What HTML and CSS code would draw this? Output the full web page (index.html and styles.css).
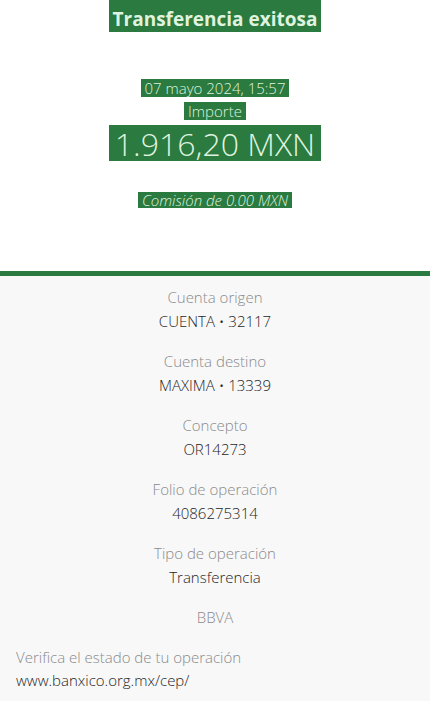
FILE: index.html
```html
<!DOCTYPE html>
<html lang="es">
<head>
<meta charset="utf-8">
<link rel="stylesheet" href="styles.css">
</head>
<body>
<section class="hero">
  <h1 class="title"><span class="hl">Transferencia exitosa</span></h1>
  <p class="date"><span class="hl">07 mayo 2024, 15:57</span></p>
  <p class="label-top"><span class="hl">Importe</span></p>
  <p class="amount"><span class="hl">1.916,20 MXN</span></p>
  <p class="fee"><span class="hl">Comisión de 0.00 MXN</span></p>
</section>
<div class="divider"></div>
<section class="details">
  <div class="row"><div class="lbl">Cuenta origen</div><div class="val">CUENTA • 32117</div></div>
  <div class="row"><div class="lbl">Cuenta destino</div><div class="val">MAXIMA • 13339</div></div>
  <div class="row"><div class="lbl">Concepto</div><div class="val">OR14273</div></div>
  <div class="row"><div class="lbl">Folio de operación</div><div class="val">4086275314</div></div>
  <div class="row"><div class="lbl">Tipo de operación</div><div class="val">Transferencia</div></div>
  <div class="bank">BBVA</div>
  <div class="verify">
    <div class="vlbl">Verifica el estado de tu operación</div>
    <div class="vlink">www.banxico.org.mx/cep/</div>
  </div>
</section>
</body>
</html>
```
FILE: styles.css
```css
* { box-sizing: border-box; }
html, body { margin: 0; padding: 0; }
body {
  width: 430px;
  height: 701px;
  overflow: hidden;
  background: #f8f8f9;
  font-family: "Open Sans", Roboto, sans-serif;
}
.hero {
  background: #ffffff;
  height: 271px;
}
.hero > * {
  margin: 0;
  display: flex;
  justify-content: center;
}
.hl {
  display: block;
  background: #2b7a3f;
  color: #dff3df;
  white-space: nowrap;
}
.hero .title { font-size: 19px; font-weight: 700; }
.title .hl { padding: 7px 4px 0; line-height: 25px; height: 32px; }
.hero .date { margin-top: 47px; font-size: 15px; font-weight: 300; }
.date .hl { line-height: 18px; padding: 0 4px; }
.hero .label-top { margin-top: 5px; font-size: 15px; font-weight: 300; }
.label-top .hl { line-height: 18px; padding: 0 4px; }
.hero .amount { margin-top: 5px; font-size: 32px; font-weight: 300; }
.amount .hl { line-height: 34px; padding: 2px 6px 0; }
.hero .fee { margin-top: 31px; font-size: 15px; font-weight: 300; font-style: italic; }
.fee .hl { line-height: 16px; padding: 0 4px; }
.divider {
  height: 5px;
  background: #2b7a3f;
}
.details {
  text-align: center;
  padding-top: 12px;
}
.row { height: 64px; }
.lbl { font-size: 15px; color: #8a8a8a; line-height: 18px; font-weight: 300; }
.val { font-size: 15px; color: #1f1f1f; line-height: 18px; margin-top: 6px; font-weight: 300; }
.bank { font-size: 15px; color: #8a8a8a; line-height: 18px; font-weight: 300; }
.verify { text-align: left; padding: 22px 16px 0; }
.vlbl { font-size: 15px; color: #8a8a8a; line-height: 18px; font-weight: 300; }
.vlink { font-size: 15px; color: #1f1f1f; line-height: 18px; margin-top: 5px; font-weight: 300; }
```
